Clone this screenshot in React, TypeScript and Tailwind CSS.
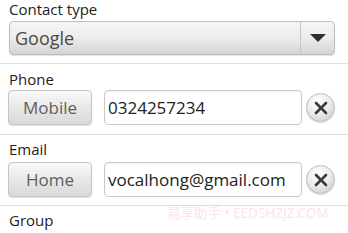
export default function App() {
  const font = { fontFamily: '"Open Sans", "Noto Sans", sans-serif' }

  const Label = ({ text, className = '' }: { text: string; className?: string }) => (
    <div className={`h-[18px] pl-[9px] text-[15px] leading-[18px] text-[#222] ${className}`}>{text}</div>
  )

  const Divider = ({ className = '' }: { className?: string }) => (
    <div className={`h-px bg-[#dedede] ${className}`} />
  )

  const ClearButton = () => (
    <div className="flex h-[29px] w-[29px] items-center justify-center rounded-full border border-[#bcbcbc] bg-[radial-gradient(circle_at_40%_30%,#ffffff_0%,#ebebeb_50%,#c4c4c4_100%)] shadow-[0_1px_1px_rgba(0,0,0,0.15)]">
      <svg width="14" height="14" viewBox="0 0 14 14">
        <path d="M2 2 L12 12 M12 2 L2 12" stroke="#3a3a3a" strokeWidth="2.6" strokeLinecap="round" />
      </svg>
    </div>
  )

  const Row = ({ type, value, className = '' }: { type: string; value: string; className?: string }) => (
    <div className={`flex h-[35px] items-center pl-[8px] ${className}`}>
      <div className="flex h-full w-[84px] items-center justify-center rounded-[4px] border border-[#c4c4c4] bg-gradient-to-b from-[#f8f8f8] to-[#d9d9d9] text-[17px] text-[#5e5e5e] shadow-[0_1px_1px_rgba(0,0,0,0.12)]">
        {type}
      </div>
      <div className="ml-[12px] flex h-full w-[198px] items-center rounded-[4px] border border-[#c8c8c8] bg-white pl-[3px] text-[17px] text-[#222] shadow-[inset_0_1px_1px_rgba(0,0,0,0.06)]">
        {value}
      </div>
      <div className="ml-[4px]">
        <ClearButton />
      </div>
    </div>
  )

  return (
    <div className="relative h-[233px] w-[348px] overflow-hidden bg-white" style={font}>
      <Label text="Contact type" />
      <div className="ml-[9px] mt-[3px] flex h-[34px] w-[326px] overflow-hidden rounded-[4px] border border-[#bdbdbd] bg-gradient-to-b from-[#f6f6f6] via-[#ececec] to-[#d4d4d4] shadow-[0_1px_1px_rgba(0,0,0,0.12)]">
        <div className="flex flex-1 items-center pl-[5px] text-[18px] text-[#4a4a4a]">Google</div>
        <div className="flex w-[34px] items-center justify-center border-l border-[#c6c6c6]">
          <svg width="16" height="8" viewBox="0 0 16 8">
            <path d="M0 0 L16 0 L8 8 Z" fill="#2e2e2e" />
          </svg>
        </div>
      </div>
      <Divider className="mt-[8px]" />
      <Label text="Phone" className="mt-[6px]" />
      <Row type="Mobile" value="0324257234" className="mt-[2px]" />
      <Divider className="mt-[9px]" />
      <Label text="Email" className="mt-[5px]" />
      <Row type="Home" value="vocalhong@gmail.com" className="mt-[4px]" />
      <Divider className="mt-[8px]" />
      <Label text="Group" className="mt-[5px]" />
      <div
        className="absolute left-[167px] top-[203px] whitespace-nowrap text-[13.5px] leading-[20px] text-[#fbe3f1]"
        style={{ fontFamily: '"Noto Sans", "Noto Sans CJK SC", sans-serif' }}
      >
        易享助手 • EEDSHZJZ.COM
      </div>
    </div>
  )
}
